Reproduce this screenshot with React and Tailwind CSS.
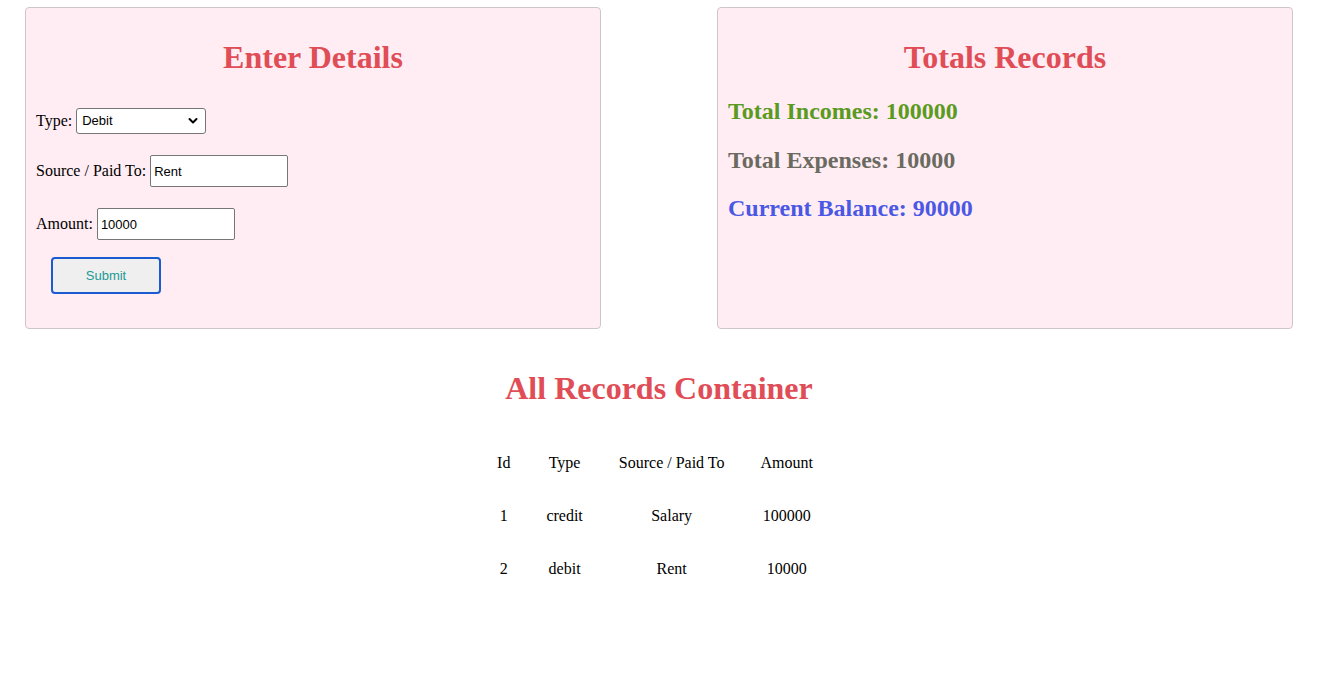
import React from 'react';

const records = [
  { id: 1, type: 'credit', source: 'Salary', amount: 100000 },
  { id: 2, type: 'debit', source: 'Rent', amount: 10000 },
];

function Field({ label, children, className }) {
  return (
    <div className={`flex items-center ${className}`}>
      <label className="mr-1">{label}</label>
      {children}
    </div>
  );
}

export default function App() {
  return (
    <div className="w-[1318px] min-h-[677px] bg-white text-black text-[16px] font-['Liberation_Serif',serif]">
      <div className="flex justify-between px-[25px] pt-[7px]">
        {/* form card */}
        <div className="w-[576px] h-[322px] bg-[#ffedf3] border border-[#cfc6ca] rounded-[4px] p-[10px]">
          <h1 className="mt-[21px] text-center text-[32px] leading-[37px] font-bold text-[#e04d57]">Enter Details</h1>
          <Field label="Type:" className="mt-[32px]">
            <div className="relative">
              <select className="appearance-none w-[130px] h-[26px] bg-white border border-[#767676] rounded-[3px] pl-[5px] text-[13px] font-['Liberation_Sans',sans-serif] outline-none" defaultValue="Debit">
                <option>Debit</option>
                <option>Credit</option>
              </select>
              <svg className="absolute right-[8px] top-[9px] pointer-events-none" width="10" height="8" viewBox="0 0 10 8">
                <path d="M1.5 2 L5 5.5 L8.5 2" fill="none" stroke="#000" strokeWidth="2" strokeLinecap="round" strokeLinejoin="round" />
              </svg>
            </div>
          </Field>
          <Field label="Source / Paid To:" className="mt-[21px]">
            <input defaultValue="Rent" className="w-[138px] h-[32px] bg-white border border-[#767676] rounded-[2px] px-[3px] text-[13px] font-['Liberation_Sans',sans-serif] outline-none" />
          </Field>
          <Field label="Amount:" className="mt-[21px]">
            <input defaultValue="10000" className="w-[138px] h-[32px] bg-white border border-[#767676] rounded-[2px] px-[3px] text-[13px] font-['Liberation_Sans',sans-serif] outline-none" />
          </Field>
          <button className="ml-[15px] mt-[17px] w-[110px] h-[37px] bg-[#efefef] border-2 border-[#1a5ccf] rounded-[4px] text-[13px] text-[#1a9a96] font-['Liberation_Sans',sans-serif]">
            Submit
          </button>
        </div>

        {/* totals card */}
        <div className="w-[576px] h-[322px] bg-[#ffedf3] border border-[#cfc6ca] rounded-[4px] p-[10px]">
          <h1 className="mt-[21px] text-center text-[32px] leading-[37px] font-bold text-[#e04d57]">Totals Records</h1>
          <div className="mt-[21px] flex flex-col gap-[20.5px] text-[24px] leading-[28px] font-bold">
            <h2 className="text-[#5a9a20]">Total Incomes: 100000</h2>
            <h2 className="text-[#6b6a60]">Total Expenses: 10000</h2>
            <h2 className="text-[#4a58e4]">Current Balance: 90000</h2>
          </div>
        </div>
      </div>

      <h1 className="mt-[41px] text-center text-[32px] leading-[37px] font-bold text-[#e04d57]">All Records Container</h1>

      <div className="flex justify-center pr-[8px]">
        <table className="mt-[28px] border-separate border-spacing-[2px] text-center">
          <thead>
            <tr>
              <th className="font-normal px-[17px] py-4 leading-[19px]">Id</th>
              <th className="font-normal px-[17px] py-4 leading-[19px]">Type</th>
              <th className="font-normal px-[17px] py-4 leading-[19px]">Source / Paid To</th>
              <th className="font-normal px-[17px] py-4 leading-[19px]">Amount</th>
            </tr>
          </thead>
          <tbody>
            {records.map((r) => (
              <tr key={r.id}>
                <td className="px-[17px] py-4 leading-[19px]">{r.id}</td>
                <td className="px-[17px] py-4 leading-[19px]">{r.type}</td>
                <td className="px-[17px] py-4 leading-[19px]">{r.source}</td>
                <td className="px-[17px] py-4 leading-[19px]">{r.amount}</td>
              </tr>
            ))}
          </tbody>
        </table>
      </div>
    </div>
  );
}
